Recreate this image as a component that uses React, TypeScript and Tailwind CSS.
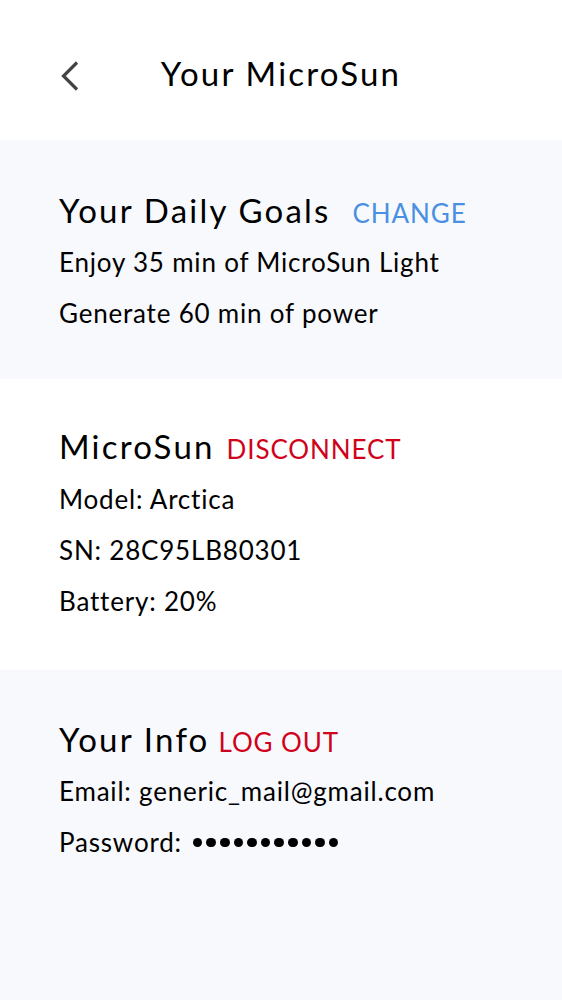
import React from "react";

const font = { fontFamily: '"Lato", "Noto Sans", sans-serif' };

function Heading({ title, action, color, gap }: { title: string; action: string; color: string; gap: string }) {
  return (
    <div className="flex h-[48px] items-baseline overflow-visible leading-[48px]">
      <span className="text-[33px] tracking-[2.2px] text-black">{title}</span>
      <span className={`text-[26px] tracking-[0.9px] ${color} ${gap}`}>{action}</span>
    </div>
  );
}

function Line({ children }: { children: React.ReactNode }) {
  return <div className="text-[26px] leading-[51px] tracking-[0.8px] text-black whitespace-nowrap">{children}</div>;
}

export default function App() {
  return (
    <div className="flex min-h-screen flex-col bg-white" style={font}>
      <header className="grid h-[140px] grid-cols-[1fr_auto_1fr] items-start bg-white pt-[49px]">
        <div className="pl-[60px] pt-[11px]">
          <svg width="20" height="32" viewBox="0 0 20 32" fill="none">
            <path d="M17 2.5 L3.5 16 L17 29.5" stroke="#444444" strokeWidth="3.2" strokeLinecap="butt" strokeLinejoin="miter" />
          </svg>
        </div>
        <h1 className="text-[33px] leading-[48px] tracking-[2.2px] text-black">Your MicroSun</h1>
        <div />
      </header>

      <section className="bg-[#f8f9fd] pl-[59px] pt-[46px] pb-[40px]">
        <Heading title="Your Daily Goals" action="CHANGE" color="text-[#4a90e2]" gap="ml-[22px]" />
        <div className="mt-[3px]">
          <Line>Enjoy 35 min of MicroSun Light</Line>
          <Line>Generate 60 min of power</Line>
        </div>
      </section>

      <section className="bg-white pl-[59px] pt-[43px] pb-[43px]">
        <Heading title="MicroSun" action="DISCONNECT" color="text-[#d0021b]" gap="ml-[12px]" />
        <div className="mt-[4px]">
          <Line>Model: Arctica</Line>
          <Line>SN: 28C95LB80301</Line>
          <Line>Battery: 20%</Line>
        </div>
      </section>

      <section className="flex-1 bg-[#f8f9fd] pl-[59px] pt-[45px] pb-[40px]">
        <Heading title="Your Info" action="LOG OUT" color="text-[#d0021b]" gap="ml-[9px]" />
        <div className="mt-[3px]">
          <Line>Email: generic_mail@gmail.com</Line>
          <div className="flex h-[51px] items-center">
            <span className="text-[26px] leading-[51px] tracking-[0.8px] text-black">Password:</span>
            <span className="ml-[11px] flex gap-[4.1px]">
              {Array.from({ length: 11 }).map((_, i) => (
                <span key={i} className="h-[9.5px] w-[9.5px] rounded-full bg-black" />
              ))}
            </span>
          </div>
        </div>
      </section>
    </div>
  );
}
